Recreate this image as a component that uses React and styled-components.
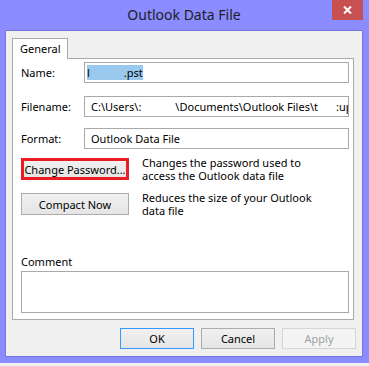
import React from 'react';
import styled, {createGlobalStyle} from 'styled-components';

const GlobalStyle = createGlobalStyle`
  html, body {
    margin: 0;
    padding: 0;
    background: #f0f0f0;
  }
  body {
    font-family: "Noto Sans", "Segoe UI", sans-serif;
    font-size: 11px;
    color: #000;
  }
`;

const Window = styled.div`
  width: 369px;
  height: 363px;
  box-sizing: border-box;
  background: #8a8cff;
  padding: 0 6px 6px 5px;
  display: flex;
  flex-direction: column;
`;

const TitleBar = styled.div`
  height: 30px;
  display: grid;
  grid-template-columns: 1fr auto 1fr;
`;

const Title = styled.div`
  grid-column: 2;
  font-size: 14px;
  line-height: 30px;
  color: #1e1e1e;
`;

const CloseButton = styled.div`
  grid-column: 3;
  justify-self: end;
  width: 31px;
  height: 20px;
  background: #c75050;
  display: flex;
  align-items: center;
  justify-content: center;
`;

const Client = styled.div`
  flex: 1;
  background: #f0f0f0;
  border: 1px solid #7375e4;
  display: flex;
  flex-direction: column;
  padding: 7px 6px 7px 6px;
`;

const Tab = styled.div`
  align-self: flex-start;
  position: relative;
  z-index: 1;
  width: 56px;
  height: 21px;
  box-sizing: border-box;
  margin-bottom: -1px;
  background: #fff;
  border: 1px solid #a9a9a9;
  border-bottom: none;
  padding-left: 7px;
  line-height: 20px;
`;

const Panel = styled.div`
  flex: 1;
  margin-right: 2px;
  background: #fff;
  border: 1px solid #a9a9a9;
  display: flex;
  flex-direction: column;
  padding: 3px 4px 6px 8px;
`;

const FieldRow = styled.div`
  display: grid;
  grid-template-columns: 63px 1fr;
  align-items: center;
  margin-top: ${p => p.$top || 0}px;
`;

const Label = styled.div`
  line-height: 14px;
`;

const TextBox = styled.div`
  height: 21px;
  box-sizing: border-box;
  border: 1px solid #a9a9a9;
  background: #fff;
  padding-left: ${p => p.$pad}px;
  line-height: 19px;
  white-space: nowrap;
  overflow: hidden;
`;

const Selected = styled.span`
  background: #99c9ef;
  color: #000;
`;

const Hidden = styled.span`
  display: inline-block;
  width: ${p => p.$w}px;
`;

const ActionRow = styled.div`
  display: grid;
  grid-template-columns: 108px 1fr;
  column-gap: 13px;
  align-items: start;
  margin-top: ${p => p.$top}px;
`;

const DlgButton = styled.div`
  height: ${p => p.$h || 21}px;
  box-sizing: border-box;
  border: ${p => (p.$mark ? '3px solid #ed1c24' : p.$default ? '1px solid #3399ff' : p.$disabled ? '1px solid #d5d5d5' : '1px solid #acacac')};
  background: ${p => (p.$disabled ? '#f4f4f4' : 'linear-gradient(#f0f0f0, #e5e5e5)')};
  color: ${p => (p.$disabled ? '#a0a0a0' : '#000')};
  display: flex;
  align-items: center;
  justify-content: center;
  white-space: nowrap;
`;

const Description = styled.div`
  line-height: 13px;
  margin-top: -2px;
`;

const CommentLabel = styled.div`
  margin-top: auto;
  line-height: 14px;
`;

const CommentBox = styled.div`
  height: 42px;
  box-sizing: border-box;
  margin-top: 2px;
  border: 1px solid #a9a9a9;
  background: #fff;
`;

const Footer = styled.div`
  display: flex;
  justify-content: flex-end;
  gap: 7px;
  margin-top: 8px;
`;

const FooterButton = styled(DlgButton)`
  width: 74px;
`;

const App = () => (
  <>
    <GlobalStyle/>
    <Window>
      <TitleBar>
        <Title>Outlook Data File</Title>
        <CloseButton>
          <svg width="9" height="8" viewBox="0 0 9 8">
            <path d="M1 0.5 L8 7.5 M8 0.5 L1 7.5" stroke="#fff" strokeWidth="2"/>
          </svg>
        </CloseButton>
      </TitleBar>
      <Client>
        <Tab>General</Tab>
        <Panel>
          <FieldRow>
            <Label>Name:</Label>
            <TextBox $pad={2}>
              <Selected>l<Hidden $w={34}/>.pst</Selected>
            </TextBox>
          </FieldRow>
          <FieldRow $top={13}>
            <Label>Filename:</Label>
            <TextBox $pad={6}>
              C:\Users\:<Hidden $w={34}/>\Documents\Outlook Files\t<Hidden $w={18}/>:up
            </TextBox>
          </FieldRow>
          <FieldRow $top={11}>
            <Label>Format:</Label>
            <TextBox $pad={6}>Outlook Data File</TextBox>
          </FieldRow>
          <ActionRow $top={9}>
            <DlgButton $mark $h={22}>Change Password...</DlgButton>
            <Description>Changes the password used to<br/>access the Outlook data file</Description>
          </ActionRow>
          <ActionRow $top={11}>
            <DlgButton $h={22}>Compact Now</DlgButton>
            <Description>Reduces the size of your Outlook<br/>data file</Description>
          </ActionRow>
          <CommentLabel>Comment</CommentLabel>
          <CommentBox/>
        </Panel>
        <Footer>
          <FooterButton $default>OK</FooterButton>
          <FooterButton>Cancel</FooterButton>
          <FooterButton $disabled>Apply</FooterButton>
        </Footer>
      </Client>
    </Window>
  </>
);

export default App;
